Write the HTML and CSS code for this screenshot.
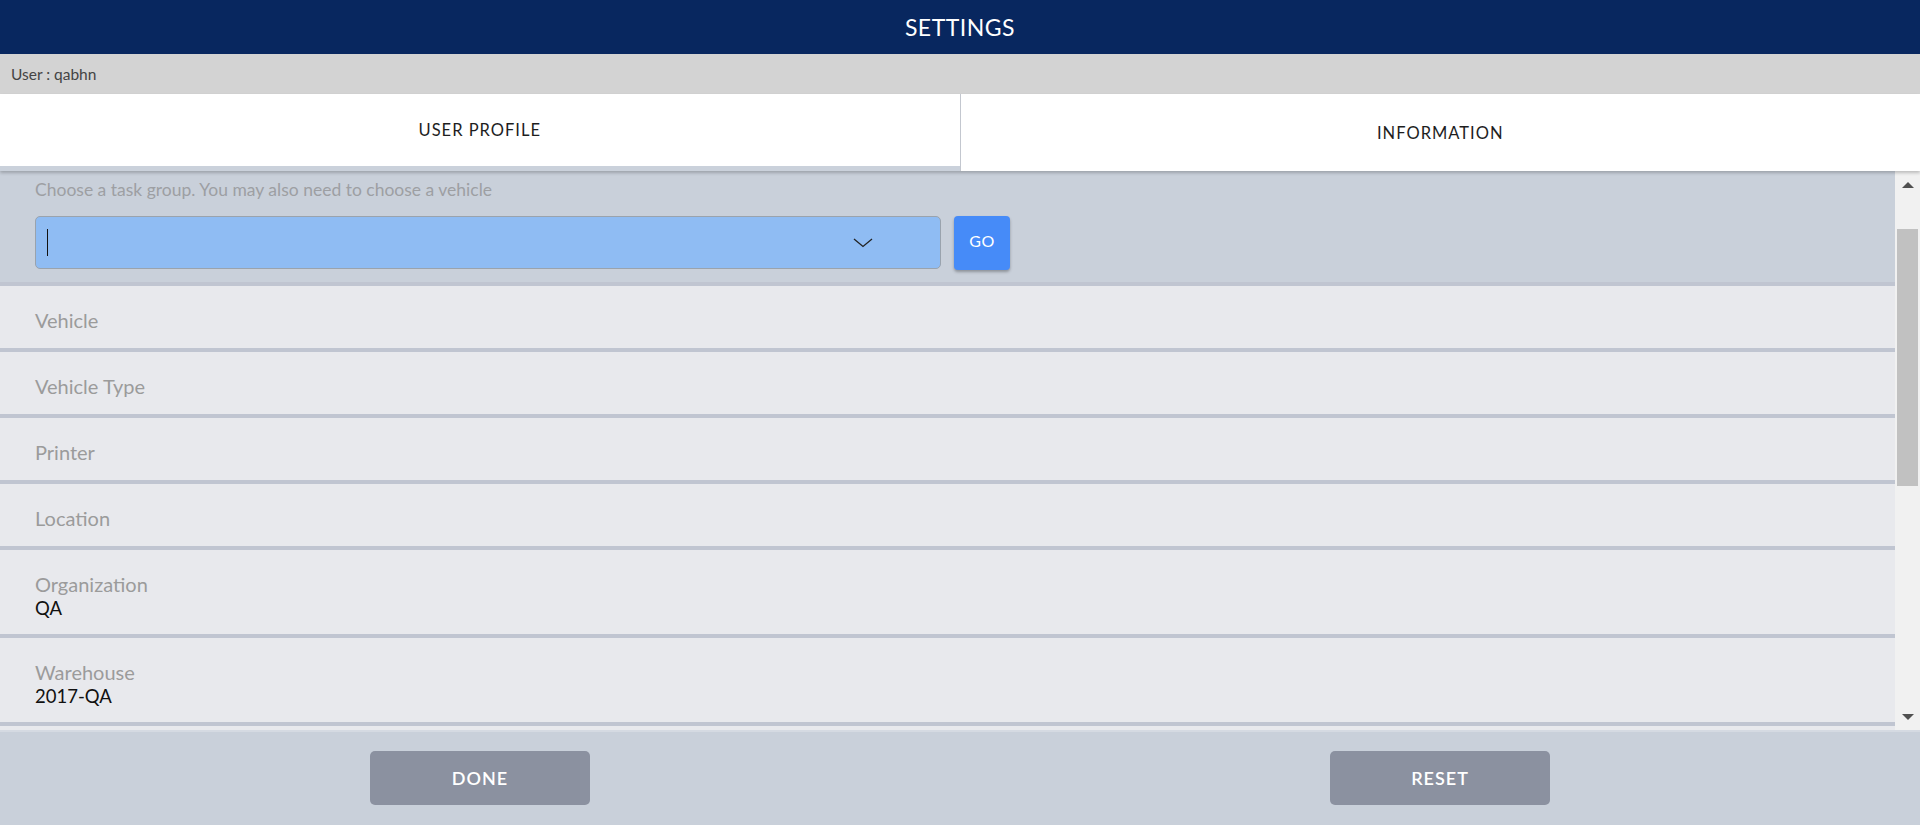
FILE: index.html
```html
<!DOCTYPE html>
<html>
<head>
<meta charset="utf-8">
<title>Settings</title>
<link rel="stylesheet" href="styles.css">
</head>
<body>
<div class="app">
  <header class="topbar">SETTINGS</header>
  <div class="userbar">User : qabhn</div>
  <nav class="tabs">
    <div class="tab tab-active">USER PROFILE</div>
    <div class="tab tab-info">INFORMATION</div>
  </nav>
  <main class="main">
    <div class="content">
      <section class="taskgroup">
        <div class="tg-label">Choose a task group. You may also need to choose a vehicle</div>
        <div class="tg-controls">
          <div class="select">
            <span class="caret"></span>
            <svg class="chevron" width="20" height="10" viewBox="0 0 20 10"><path d="M1 1 L10 8.5 L19 1" fill="none" stroke="#222" stroke-width="1.3"/></svg>
          </div>
          <button class="go">GO</button>
        </div>
      </section>
      <div class="row"><div class="label">Vehicle</div></div>
      <div class="row"><div class="label">Vehicle Type</div></div>
      <div class="row"><div class="label">Printer</div></div>
      <div class="row"><div class="label">Location</div></div>
      <div class="row"><div class="label">Organization</div><div class="value">QA</div></div>
      <div class="row"><div class="label">Warehouse</div><div class="value">2017-QA</div></div>
    </div>
    <div class="scrollbar">
      <div class="sb-btn"><span class="tri-up"></span></div>
      <div class="sb-track"><div class="sb-thumb"></div></div>
      <div class="sb-btn"><span class="tri-down"></span></div>
    </div>
  </main>
  <footer class="footer">
    <div class="f-cell"><button class="fbtn">DONE</button></div>
    <div class="f-cell"><button class="fbtn">RESET</button></div>
  </footer>
</div>
</body>
</html>
```

FILE: styles.css
```css
* { box-sizing: border-box; }
html, body { margin: 0; padding: 0; }
body {
  font-family: "Source Sans Pro", Lato, "Liberation Sans", sans-serif;
  background: #e8e9ed;
}
.app {
  width: 1920px;
  height: 825px;
  display: flex;
  flex-direction: column;
  overflow: hidden;
}
.topbar {
  height: 54px;
  flex: none;
  background: #08275f;
  color: #fff;
  font-size: 23px;
  letter-spacing: 0.5px;
  display: flex;
  align-items: center;
  justify-content: center;
}
.userbar {
  height: 40px;
  flex: none;
  background: #d3d3d3;
  color: #444;
  font-size: 15.5px;
  display: flex;
  align-items: center;
  padding-left: 11px;
}
.tabs {
  height: 77px;
  flex: none;
  display: flex;
  position: relative;
  z-index: 2;
  box-shadow: 0 2px 3px rgba(0,0,0,0.22);
}
.tab {
  flex: 1;
  background: #fff;
  display: flex;
  align-items: center;
  justify-content: center;
  font-size: 16.5px;
  letter-spacing: 1px;
  color: #1e1e1e;
}
.tab-active {
  border-bottom: 5px solid #cad1db;
}
.tab-info {
  border-left: 1px solid #c3c7cf;
}
.main {
  flex: 1;
  display: flex;
  min-height: 0;
  background: #e8e9ed;
}
.content {
  flex: 1;
  overflow: hidden;
  background: #e8e9ed;
}
.taskgroup {
  background: #c9d0da;
  border-bottom: 4px solid #c0c5d1;
  padding: 8px 35px 12px;
}
.tg-label {
  font-size: 17.5px;
  line-height: 22px;
  color: #9d9fa3;
}
.tg-controls {
  margin-top: 15px;
  display: flex;
  gap: 13px;
  align-items: flex-start;
}
.select {
  width: 906px;
  height: 53px;
  background: #8fbcf3;
  border: 1px solid #9aa3ad;
  border-radius: 5px;
  display: flex;
  align-items: center;
  justify-content: space-between;
  padding: 0 67px 0 11px;
}
.caret {
  width: 1px;
  height: 27px;
  background: #111;
}
.chevron { display: block; margin-top: 1px; }
.go {
  width: 56px;
  height: 54px;
  border: none;
  border-radius: 4px;
  background: #468bf8;
  color: #fff;
  font-family: inherit;
  font-size: 16px;
  line-height: 16px;
  letter-spacing: 0.5px;
  box-shadow: 0 2px 3px rgba(0,0,0,0.3);
  padding: 0 0 4px;
}
.row {
  border-bottom: 4px solid #c0c5d1;
  padding: 22px 35px 16px;
  background: #e8e9ed;
}
.label {
  font-size: 20px;
  line-height: 24px;
  color: #9b9b9b;
}
.value {
  font-size: 18.5px;
  line-height: 22px;
  color: #111;
  position: relative;
  top: 1px;
}
.scrollbar {
  width: 25px;
  flex: none;
  background: #f1f1f1;
  display: flex;
  flex-direction: column;
}
.sb-btn {
  height: 27px;
  flex: none;
  display: flex;
  align-items: center;
  justify-content: center;
}
.tri-up {
  width: 0; height: 0;
  border-left: 6px solid transparent;
  border-right: 6px solid transparent;
  border-bottom: 6px solid #505050;
}
.tri-down {
  width: 0; height: 0;
  border-left: 6px solid transparent;
  border-right: 6px solid transparent;
  border-top: 6px solid #505050;
}
.sb-track {
  flex: 1;
  padding: 31px 2px 0;
}
.sb-thumb {
  height: 257px;
  background: #c1c1c1;
}
.footer {
  height: 95px;
  flex: none;
  background: #c9d0da;
  border-top: 2px solid #d5dae2;
  display: flex;
}
.f-cell {
  flex: 1;
  display: flex;
  justify-content: center;
  padding-top: 19px;
}
.fbtn {
  width: 220px;
  height: 54px;
  border: none;
  border-radius: 5px;
  background: #8b91a0;
  color: #fff;
  font-family: inherit;
  font-size: 18px;
  font-weight: 600;
  letter-spacing: 1px;
  padding: 0;
}
```
